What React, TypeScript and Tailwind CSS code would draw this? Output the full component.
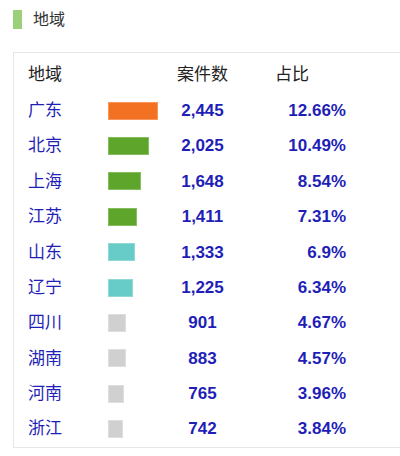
import React from "react";

type Row = { name: string; w: number; color: string; border: string; count: string; pct: string };

const ORANGE = { color: "bg-[#f37122]", border: "border-[#f7955a]" };
const GREEN = { color: "bg-[#5ea52b]", border: "border-[#86bd5f]" };
const TEAL = { color: "bg-[#67cbc8]", border: "border-[#8fd9d6]" };
const GRAY = { color: "bg-[#d0d0d0]", border: "border-[#dedede]" };

const rows: Row[] = [
  { name: "广东", w: 50, ...ORANGE, count: "2,445", pct: "12.66%" },
  { name: "北京", w: 41, ...GREEN, count: "2,025", pct: "10.49%" },
  { name: "上海", w: 33, ...GREEN, count: "1,648", pct: "8.54%" },
  { name: "江苏", w: 29, ...GREEN, count: "1,411", pct: "7.31%" },
  { name: "山东", w: 27, ...TEAL, count: "1,333", pct: "6.9%" },
  { name: "辽宁", w: 25, ...TEAL, count: "1,225", pct: "6.34%" },
  { name: "四川", w: 18, ...GRAY, count: "901", pct: "4.67%" },
  { name: "湖南", w: 18, ...GRAY, count: "883", pct: "4.57%" },
  { name: "河南", w: 16, ...GRAY, count: "765", pct: "3.96%" },
  { name: "浙江", w: 15, ...GRAY, count: "742", pct: "3.84%" },
];

const font = { fontFamily: '"Liberation Sans", "Noto Sans CJK SC", sans-serif' };

export default function App() {
  return (
    <div className="w-[400px] h-[456px] bg-white overflow-hidden" style={font}>
      <div className="flex items-center pl-[13px] pt-[10px] h-[29px]">
        <div className="w-[9px] h-[19px] bg-[#9bcf7a]" />
        <span className="ml-[11px] text-[16px] leading-none text-[#333]">地域</span>
      </div>
      <div className="ml-[13px] mt-[23px] w-[400px] border-l border-t border-b border-[#e6e6e6] pl-[14px] pt-[4px]">
        <div className="grid grid-cols-[80px_62px_65px_40px_71px] h-[36px] items-center text-[17px] text-[#222]">
          <div>地域</div>
          <div />
          <div className="text-center">案件数</div>
          <div />
          <div>占比</div>
        </div>
        {rows.map((r) => (
          <div
            key={r.name}
            className="grid grid-cols-[80px_62px_65px_40px_71px] h-[35.4px] items-center text-[17px] text-[#1f1fb8]"
          >
            <div>{r.name}</div>
            <div className="flex items-center">
              <div className={`h-[18px] border ${r.color} ${r.border}`} style={{ width: r.w }} />
            </div>
            <div className="text-center font-bold">{r.count}</div>
            <div />
            <div className="text-right font-bold">{r.pct}</div>
          </div>
        ))}
      </div>
    </div>
  );
}
